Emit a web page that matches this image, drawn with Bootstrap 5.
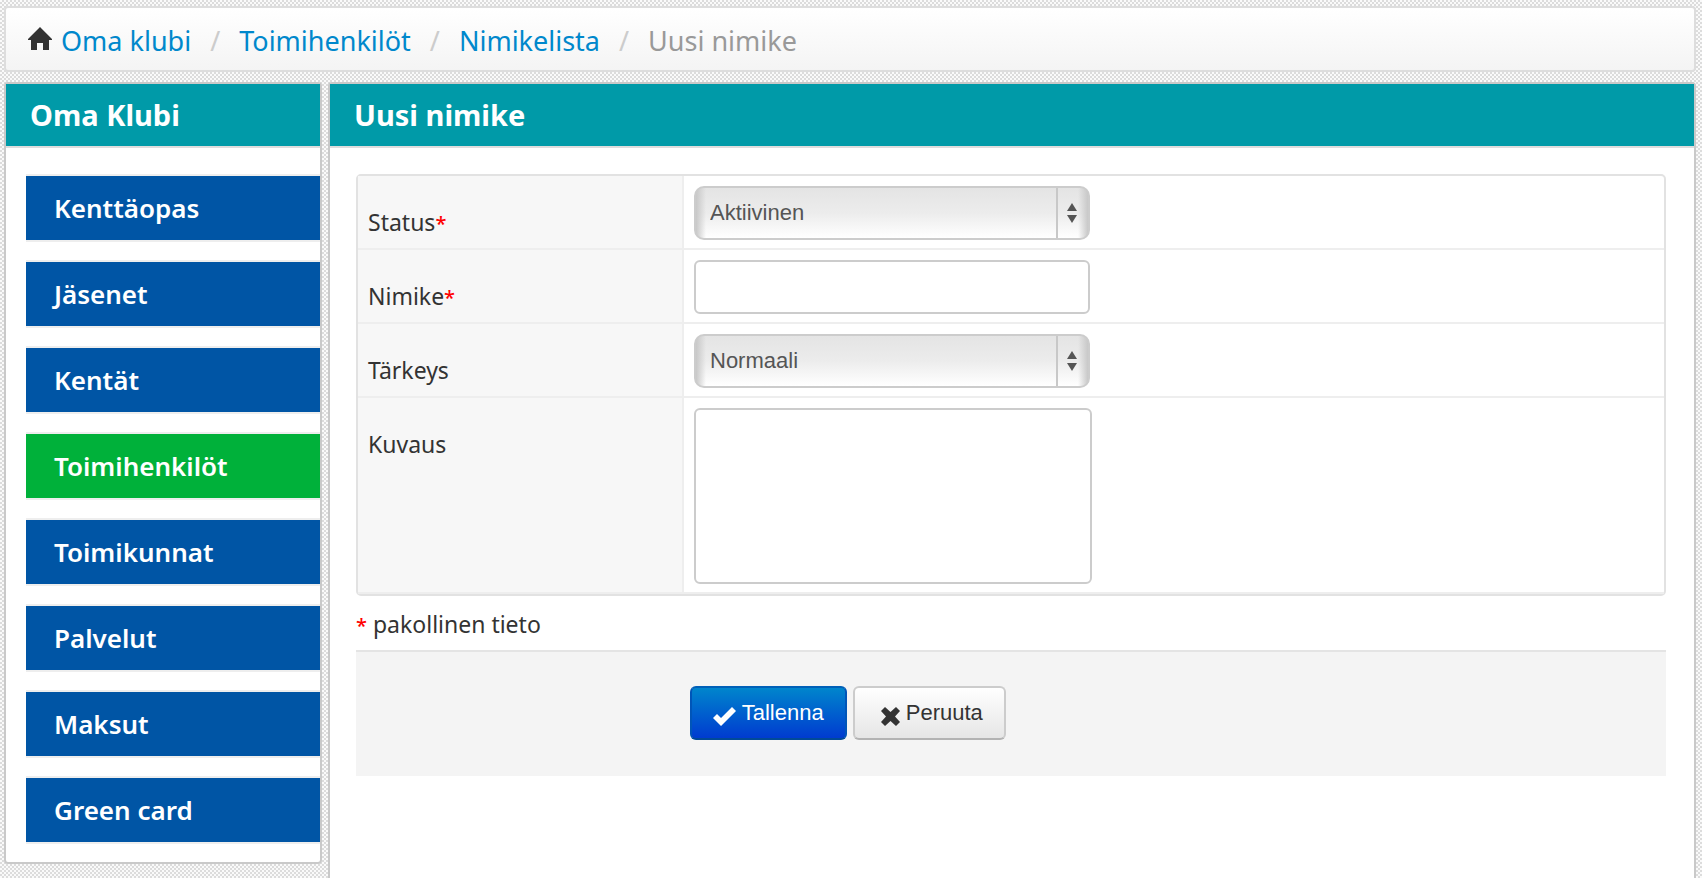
<!DOCTYPE html>
<html lang="fi">
<head>
<meta charset="utf-8">
<meta name="viewport" content="width=device-width, initial-scale=1">
<title>Uusi nimike</title>
<link href="https://cdn.jsdelivr.net/npm/bootstrap@5.3.0/dist/css/bootstrap.min.css" rel="stylesheet">
<style>
body{font-family:"Noto Sans","Open Sans",sans-serif;font-size:23px;line-height:32px;color:#333;background:#fafafa url("data:image/svg+xml,%3Csvg xmlns='http://www.w3.org/2000/svg' width='4' height='4' shape-rendering='crispEdges'%3E%3Cpath fill='%23dcdcdc' d='M2 0h2v2h-2zM0 2h2v2h-2z'/%3E%3C/svg%3E")}
.page{min-height:100vh;padding:6px 6px 0 4px}
.crumbs{--bs-breadcrumb-divider-color:#ccc;--bs-breadcrumb-item-padding-x:19px;height:66px;padding:3px 22px 0;border:2px solid #ddd;border-radius:4px;background:linear-gradient(#fff,#f4f4f4);font-size:27px;--bs-breadcrumb-item-active-color:#999}
.crumbs a{color:#0088cc;text-decoration:none}
.columns{gap:6px;margin-top:10px}
.panel{border:2px solid #c9c9c9;border-radius:4px;background:#fff}
.side{width:318px}
.panel-title{height:64px;margin:0;padding:0 24px;background:#009aa8;border-bottom:2px solid #ddd;color:#fff;font-size:29px;font-weight:700;line-height:62px}
.side-menu{padding:26px 0 18px 20px;gap:18px}
.side-menu .nav-link{height:68px;padding:0 28px;border:solid #eee;border-width:2px 0;border-radius:0;background:#0055a5;background-clip:padding-box;color:#fff;font-size:26px;font-weight:600;line-height:64px}
.side-menu .nav-link.active{background:#00b13a;background-clip:padding-box}
.main-body{padding:26px 28px 26px 26px}
.field-box{border:2px solid #e2e2e2;border-radius:5px}
.field-row{border-bottom:2px solid #eee}
.field-label{width:326px;padding:30px 10px 0;background:#f7f7f7;border-right:2px solid #eee}
.field-cell{padding:10px 10px 8px}
.field{display:block;width:396px;height:54px;padding:0 14px;border:2px solid #ccc;border-radius:6px;box-shadow:none;background:#fff;font:22px/32px "Liberation Sans",Arial,sans-serif;color:#555}
.field-area{width:398px;height:176px;resize:none}
.select-wrap{width:396px}
.field-select{appearance:none;border-radius:10px;background:linear-gradient(90deg,#c8c8c8,#c8c8c800 10px),linear-gradient(270deg,#c8c8c8,#c8c8c800 10px),linear-gradient(#c8c8c8,#c8c8c8) right 30px top/2px 100% no-repeat,linear-gradient(#e4e4e4,#ececec 50%,#fff)}
.select-arrows{right:13px;top:17px;pointer-events:none}
.req{color:#f00;font-size:20px;font-weight:500;line-height:1}
.required-note{padding:12px 0 10px}
.actions{height:126px;gap:6px;padding:34px 0 0 334px;border-top:2px solid #e4e4e4;background:#f4f4f4}
.act{height:54px;padding:0 21px;border:2px solid #ccc;border-bottom-color:#b3b3b3;border-radius:6px;background:linear-gradient(#fff,#e6e6e6);color:#333;font:22px/30px "Liberation Sans",Arial,sans-serif}
.act svg{margin-top:4px}
.act-cancel{padding:0 21px 0 26px}
.act-save{border-color:#0060b8 #0055b8 #004a98;background:linear-gradient(#0088cc,#0038d0);background-origin:border-box;color:#fff}
</style>
</head>
<body>
<div class="page d-flex flex-column">
  <nav aria-label="Polku">
    <ol class="breadcrumb crumbs align-items-center mb-0">
      <li class="breadcrumb-item d-flex align-items-center"><svg class="me-2 mb-1" width="25" height="23" viewBox="0 0 25 23" aria-hidden="true"><path fill="#333" d="M12 0 0 12v1h3v10h6v-7h6v7h6V13h3v-1z"/></svg><a href="#">Oma klubi</a></li>
      <li class="breadcrumb-item"><a href="#">Toimihenkilöt</a></li>
      <li class="breadcrumb-item"><a href="#">Nimikelista</a></li>
      <li class="breadcrumb-item active" aria-current="page">Uusi nimike</li>
    </ol>
  </nav>
  <div class="columns d-flex flex-grow-1 align-items-start">
    <aside class="panel side flex-shrink-0">
      <h2 class="panel-title">Oma Klubi</h2>
      <nav class="nav flex-column side-menu" aria-label="Oma Klubi">
        <a class="nav-link" href="#">Kenttäopas</a>
        <a class="nav-link" href="#">Jäsenet</a>
        <a class="nav-link" href="#">Kentät</a>
        <a class="nav-link active" href="#">Toimihenkilöt</a>
        <a class="nav-link" href="#">Toimikunnat</a>
        <a class="nav-link" href="#">Palvelut</a>
        <a class="nav-link" href="#">Maksut</a>
        <a class="nav-link" href="#">Green card</a>
      </nav>
    </aside>
    <main class="panel flex-grow-1 align-self-stretch border-bottom-0 rounded-bottom-0">
      <h1 class="panel-title">Uusi nimike</h1>
      <form class="main-body">
        <div class="field-box">
          <div class="field-row d-flex">
            <label class="field-label" for="status">Status<span class="req">*</span></label>
            <div class="field-cell"><div class="select-wrap position-relative"><select class="field field-select" id="status"><option>Aktiivinen</option></select><svg class="select-arrows position-absolute" width="10" height="20" aria-hidden="true"><path fill="#555" d="M5 0l5 8H0zM5 20l5-8H0z"/></svg></div></div>
          </div>
          <div class="field-row d-flex">
            <label class="field-label" for="nimike">Nimike<span class="req">*</span></label>
            <div class="field-cell"><input class="field" type="text" id="nimike"></div>
          </div>
          <div class="field-row d-flex">
            <label class="field-label" for="tarkeys">Tärkeys</label>
            <div class="field-cell"><div class="select-wrap position-relative"><select class="field field-select" id="tarkeys"><option>Normaali</option></select><svg class="select-arrows position-absolute" width="10" height="20" aria-hidden="true"><path fill="#555" d="M5 0l5 8H0zM5 20l5-8H0z"/></svg></div></div>
          </div>
          <div class="field-row d-flex">
            <label class="field-label" for="kuvaus">Kuvaus</label>
            <div class="field-cell"><textarea class="field field-area" id="kuvaus"></textarea></div>
          </div>
        </div>
        <p class="required-note mb-0"><span class="req">*</span> pakollinen tieto</p>
        <div class="actions d-flex align-items-start">
          <button class="btn act act-save" type="submit"><svg width="23" height="20" viewBox="0 0 23 20" aria-hidden="true"><path fill="#fff" d="M0 12l4-4 4 4L19 1l4 4L8 20z"/></svg> Tallenna</button>
          <button class="btn act act-cancel" type="button"><svg width="19" height="19" viewBox="0 0 19 19" aria-hidden="true"><path fill="#333" d="M4 0l5.500 5L15 0l4 4-5 5.500 5 5.500-4 4-5.500-5L4 19l-4-4 5-5.500L0 4z"/></svg> Peruuta</button>
        </div>
      </form>
    </main>
  </div>
</div>
<script src="https://cdn.jsdelivr.net/npm/bootstrap@5.3.0/dist/js/bootstrap.bundle.min.js"></script>
</body>
</html>
